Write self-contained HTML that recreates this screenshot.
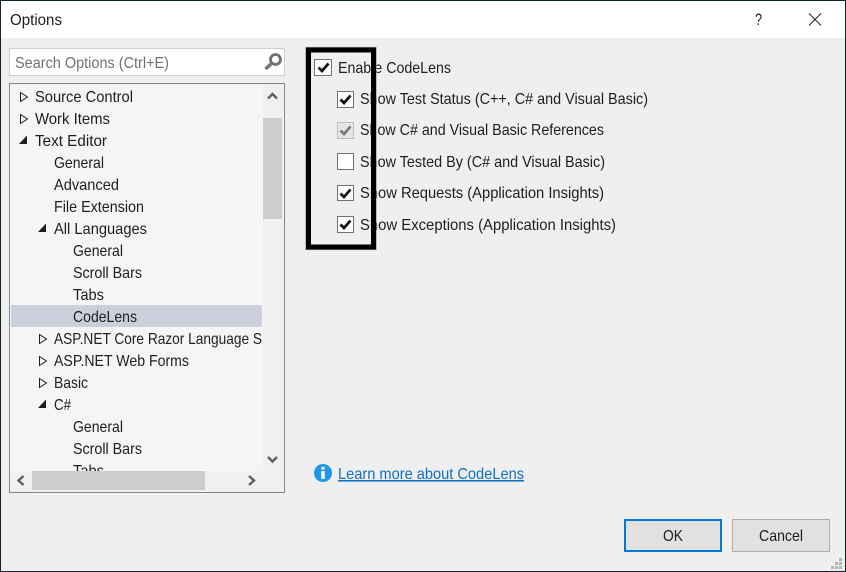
<!DOCTYPE html>
<html><head><meta charset="utf-8"><title>Options</title>
<style>
html,body{margin:0;padding:0;background:#efefef}
svg{display:block}
text{font-family:"Liberation Sans",sans-serif;font-size:15.6px;fill:#1e1e1e}
</style></head><body>
<svg xmlns="http://www.w3.org/2000/svg" width="846" height="572" viewBox="0 0 846 572">
<defs>
<clipPath id="tree"><rect x="11" y="85" width="251" height="386"/></clipPath>
<path id="chk" d="M3.5 8.5 L7 12 L13.5 4.5" fill="none" stroke-width="2.8"/>
<path id="open" d="M0.5 0.5 L7.5 5 L0.5 9.5 Z" fill="#f5f5f5" stroke="#1e1e1e" stroke-width="1"/>
</defs>
<rect width="846" height="572" fill="#efefef"/>
<rect width="846" height="38" fill="#fff"/>
<rect x="0.5" y="0.5" width="845" height="571" fill="none" stroke="#10262e"/>
<text x="10" y="25" textLength="52" lengthAdjust="spacingAndGlyphs">Options</text>
<text x="755" y="25" textLength="7" lengthAdjust="spacingAndGlyphs" style="font-size:17px">?</text>
<path d="M809 13.5 L821 25.5 M821 13.5 L809 25.5" stroke="#222" stroke-width="1" fill="none"/>

<rect x="9.5" y="48.5" width="275" height="27" fill="#fff" stroke="#ccceDB"/>
<text x="15" y="68" textLength="154" lengthAdjust="spacingAndGlyphs" style="fill:#717171">Search Options (Ctrl+E)</text>
<circle cx="275.5" cy="59.5" r="5" fill="none" stroke="#717171" stroke-width="2.8"/>
<path d="M271 64 L265.5 69" stroke="#717171" stroke-width="3.4" fill="none"/>

<rect x="9.5" y="83.5" width="275" height="409" fill="#f5f5f5" stroke="#828790"/>
<rect x="263" y="84" width="21" height="408" fill="#f0f0f0"/>
<rect x="10" y="471" width="274" height="21" fill="#f0f0f0"/>
<rect x="263" y="118" width="19" height="101" fill="#cdcdcd"/>
<rect x="32" y="471" width="173" height="19" fill="#cdcdcd"/>
<path d="M268 98.5 L272.5 94 L277 98.5" fill="none" stroke="#606060" stroke-width="2.4"/>
<path d="M268 457 L272.5 461.5 L277 457" fill="none" stroke="#606060" stroke-width="2.4"/>
<path d="M23.5 476 L18.5 480.5 L23.5 485" fill="none" stroke="#606060" stroke-width="2.4"/>
<path d="M249 476 L254 480.5 L249 485" fill="none" stroke="#606060" stroke-width="2.4"/>
<rect x="11" y="305" width="251" height="22" fill="#ccceDB"/>

<g clip-path="url(#tree)">
<use href="#open" x="20" y="92"/>
<use href="#open" x="20" y="114"/>
<path d="M19 144 H27 V135.5 Z" fill="#1e1e1e"/>
<path d="M38 232 H46 V223.5 Z" fill="#1e1e1e"/>
<use href="#open" x="39" y="334"/>
<use href="#open" x="39" y="356"/>
<use href="#open" x="39" y="378"/>
<path d="M38 408 H46 V399.5 Z" fill="#1e1e1e"/>
<text x="35" y="102" textLength="98" lengthAdjust="spacingAndGlyphs">Source Control</text>
<text x="35" y="124" textLength="75" lengthAdjust="spacingAndGlyphs">Work Items</text>
<text x="35" y="146" textLength="72" lengthAdjust="spacingAndGlyphs">Text Editor</text>
<text x="54" y="168" textLength="50" lengthAdjust="spacingAndGlyphs">General</text>
<text x="54" y="190" textLength="65" lengthAdjust="spacingAndGlyphs">Advanced</text>
<text x="54" y="212" textLength="90" lengthAdjust="spacingAndGlyphs">File Extension</text>
<text x="54" y="234" textLength="93" lengthAdjust="spacingAndGlyphs">All Languages</text>
<text x="73" y="256" textLength="50" lengthAdjust="spacingAndGlyphs">General</text>
<text x="73" y="278" textLength="69" lengthAdjust="spacingAndGlyphs">Scroll Bars</text>
<text x="73" y="300" textLength="31" lengthAdjust="spacingAndGlyphs">Tabs</text>
<text x="73" y="322" textLength="64" lengthAdjust="spacingAndGlyphs">CodeLens</text>
<text x="54" y="344" textLength="208" lengthAdjust="spacingAndGlyphs">ASP.NET Core Razor Language S</text>
<text x="54" y="366" textLength="135" lengthAdjust="spacingAndGlyphs">ASP.NET Web Forms</text>
<text x="54" y="388" textLength="34" lengthAdjust="spacingAndGlyphs">Basic</text>
<text x="54" y="410" textLength="17" lengthAdjust="spacingAndGlyphs">C#</text>
<text x="73" y="432" textLength="50" lengthAdjust="spacingAndGlyphs">General</text>
<text x="73" y="454" textLength="69" lengthAdjust="spacingAndGlyphs">Scroll Bars</text>
<text x="73" y="476" textLength="31" lengthAdjust="spacingAndGlyphs">Tabs</text>
</g>

<text x="338" y="73" textLength="113" lengthAdjust="spacingAndGlyphs">Enable CodeLens</text>
<text x="360" y="104" textLength="288" lengthAdjust="spacingAndGlyphs">Show Test Status (C++, C# and Visual Basic)</text>
<text x="360" y="135" textLength="244" lengthAdjust="spacingAndGlyphs">Show C# and Visual Basic References</text>
<text x="360" y="167" textLength="245" lengthAdjust="spacingAndGlyphs">Show Tested By (C# and Visual Basic)</text>
<text x="360" y="198" textLength="244" lengthAdjust="spacingAndGlyphs">Show Requests (Application Insights)</text>
<text x="360" y="230" textLength="256" lengthAdjust="spacingAndGlyphs">Show Exceptions (Application Insights)</text>

<rect x="314.5" y="59.5" width="17" height="16" fill="#fff" stroke="#707070"/>
<use href="#chk" x="315" y="59" stroke="#111"/>
<rect x="337.5" y="91.5" width="16" height="16" fill="#fff" stroke="#707070"/>
<use href="#chk" x="337" y="91" stroke="#111"/>
<rect x="337.5" y="122.5" width="16" height="16" fill="#e6e6e6" stroke="#bcbcbc"/>
<use href="#chk" x="337" y="122" stroke="#7c7c7c"/>
<rect x="337.5" y="153.5" width="16" height="16" fill="#fff" stroke="#707070"/>
<rect x="337.5" y="185.5" width="16" height="15" fill="#fff" stroke="#707070"/>
<use href="#chk" x="337" y="185" stroke="#111"/>
<rect x="337.5" y="216.5" width="16" height="16" fill="#fff" stroke="#707070"/>
<use href="#chk" x="337" y="216" stroke="#111"/>

<rect x="308.5" y="50" width="65" height="197" fill="none" stroke="#000" stroke-width="5"/>
<rect x="305.7" y="47.2" width="70.6" height="202.6" fill="none" stroke="#9a9a9a" stroke-width="0.6"/>

<circle cx="323" cy="473" r="9" fill="#1c97ea"/>
<rect x="321.3" y="471" width="3.4" height="8" fill="#fff"/>
<rect x="321.3" y="466.8" width="3.4" height="2.8" fill="#fff"/>
<text x="338" y="479" textLength="186" lengthAdjust="spacingAndGlyphs" style="fill:#0e70c0;text-decoration:underline">Learn more about CodeLens</text>

<rect x="625" y="520" width="96" height="31" fill="#e1e1e1" stroke="#0078d7" stroke-width="2"/>
<text x="663" y="541" textLength="20" lengthAdjust="spacingAndGlyphs">OK</text>
<rect x="732.5" y="519.5" width="97" height="32" fill="#e1e1e1" stroke="#adadad"/>
<text x="759" y="541" textLength="44" lengthAdjust="spacingAndGlyphs">Cancel</text>

<g fill="#b4b4b4">
<rect x="839" y="558" width="3" height="3"/>
<rect x="835" y="562" width="3" height="3"/><rect x="839" y="562" width="3" height="3"/>
<rect x="831" y="566" width="3" height="3"/><rect x="835" y="566" width="3" height="3"/><rect x="839" y="566" width="3" height="3"/>
</g>
</svg>
</body></html>
